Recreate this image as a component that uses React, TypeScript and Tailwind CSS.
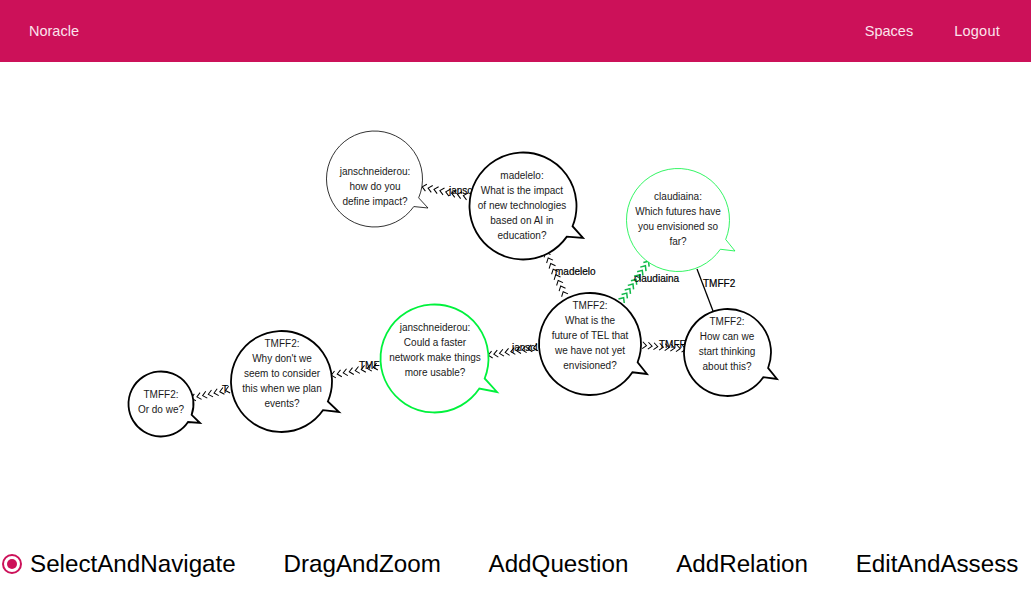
const pink = "#cc1159";
const green = "#00f23c";

type Bubble = {
  cx: number;
  cy: number;
  r: number;
  stroke: string;
  width: number;
  tail: [number, number, number, number, number, number];
  textX: number;
  firstY: number;
  lines: string[];
};

const bubbles: Bubble[] = [
  { cx: 374.5, cy: 179, r: 48, stroke: "#000", width: 0.8, tail: [419, 198, 428, 208, 413, 206], textX: 375, firstY: 175, lines: ["janschneiderou:", "how do you", "define impact?"] },
  { cx: 523, cy: 206, r: 53.5, stroke: "#000", width: 1.8, tail: [572, 226, 583, 238, 566, 236], textX: 522, firstY: 179, lines: ["madelelo:", "What is the impact", "of new technologies", "based on AI in", "education?"] },
  { cx: 678, cy: 220, r: 51.5, stroke: green, width: 0.8, tail: [727, 240, 735, 251, 720, 249], textX: 678, firstY: 200, lines: ["claudiaina:", "Which futures have", "you envisioned so", "far?"] },
  { cx: 590, cy: 344, r: 51, stroke: "#000", width: 1.8, tail: [637, 362, 647, 374, 632, 372], textX: 590, firstY: 309, lines: ["TMFF2:", "What is the", "future of TEL that", "we have not yet", "envisioned?"] },
  { cx: 727.5, cy: 352.5, r: 43.5, stroke: "#000", width: 1.8, tail: [768, 368, 777, 379, 763, 377], textX: 727, firstY: 325, lines: ["TMFF2:", "How can we", "start thinking", "about this?"] },
  { cx: 434.5, cy: 358.5, r: 54, stroke: green, width: 1.8, tail: [486, 379, 497, 392, 480, 389], textX: 435, firstY: 331, lines: ["janschneiderou:", "Could a faster", "network make things", "more usable?"] },
  { cx: 281.5, cy: 381.5, r: 50.5, stroke: "#000", width: 1.8, tail: [329, 402, 339, 412, 323, 410], textX: 282, firstY: 347, lines: ["TMFF2:", "Why don't we", "seem to consider", "this when we plan", "events?"] },
  { cx: 161, cy: 404, r: 32.5, stroke: "#000", width: 1.8, tail: [192, 415, 200, 423, 188, 422], textX: 161, firstY: 398, lines: ["TMFF2:", "Or do we?"] },
];

// labels are cut where the bubbles cover them in the picture
const edges = [
  { from: [470, 197], to: [423, 187], color: "#000", weight: 1, label: "jansc", lx: 449, ly: 194 },
  { from: [566, 298], to: [546, 253], color: "#000", weight: 1, label: "madelelo", lx: 555, ly: 275 },
  { from: [620, 303], to: [648, 262], color: "#12b84a", weight: 1.5, label: "claudiaina", lx: 634, ly: 282 },
  { from: [540, 347], to: [489, 355], color: "#000", weight: 1, label: "janscl", lx: 512, ly: 351 },
  { from: [640, 345], to: [685, 349], color: "#000", weight: 1, label: "TMFF", lx: 659, ly: 348 },
  { from: [380, 366], to: [332, 375], color: "#000", weight: 1, label: "TMF", lx: 359, ly: 369 },
  { from: [232, 389], to: [192, 398], color: "#000", weight: 1, label: "T", lx: 222, ly: 393 },
];

function bubblePath(b: Bubble) {
  // snap the tail's base points onto the circle so the outline is one stroke
  const snap = (x: number, y: number) => {
    const a = Math.atan2(y - b.cy, x - b.cx);
    return [b.cx + b.r * Math.cos(a), b.cy + b.r * Math.sin(a)];
  };
  const [sx, sy] = snap(b.tail[0], b.tail[1]);
  const [ex, ey] = snap(b.tail[4], b.tail[5]);
  return `M${sx} ${sy}A${b.r} ${b.r} 0 1 0 ${ex} ${ey}L${b.tail[2]} ${b.tail[3]}Z`;
}

function Chevrons({ from, to, color, weight }: { from: number[]; to: number[]; color: string; weight: number }) {
  const dx = to[0] - from[0];
  const dy = to[1] - from[1];
  const len = Math.hypot(dx, dy);
  const count = Math.floor(len / 5.5);
  const angle = (Math.atan2(dy, dx) * 180) / Math.PI;
  return (
    <g>
      {Array.from({ length: count }, (_, i) => {
        const t = (i + 0.8) / count;
        return (
          <path
            key={i}
            d="M-2 -3.5L2 0L-2 3.5"
            fill="none"
            stroke={color}
            strokeWidth={weight}
            transform={`translate(${from[0] + dx * t} ${from[1] + dy * t}) rotate(${angle})`}
          />
        );
      })}
    </g>
  );
}

function Graph() {
  return (
    <svg width="1031" height="470" viewBox="0 62 1031 470" className="block font-['Liberation_Sans',sans-serif]">
      {edges.map((e, i) => (
        <g key={i}>
          <Chevrons from={e.from} to={e.to} color={e.color} weight={e.weight} />
          <text x={e.lx} y={e.ly} fontSize="10" fill="#000" stroke="#000" strokeWidth="0.2">
            {e.label}
          </text>
        </g>
      ))}
      <line x1="697" y1="269" x2="713" y2="311" stroke="#000" strokeWidth="1.3" />
      <text x="703" y="287" fontSize="10" fill="#000" stroke="#000" strokeWidth="0.2">
        TMFF2
      </text>
      {bubbles.map((b, i) => (
        <g key={i}>
          <path d={bubblePath(b)} fill="#fff" stroke={b.stroke} strokeWidth={b.width} strokeLinejoin="miter" />
          {b.lines.map((line, j) => (
            <text key={j} x={b.textX} y={b.firstY + j * 15} fontSize="10" fill="#1a1a1a" textAnchor="middle">
              {line}
            </text>
          ))}
        </g>
      ))}
    </svg>
  );
}

const tools = ["DragAndZoom", "AddQuestion", "AddRelation", "EditAndAssess"];

export default function App() {
  return (
    <div className="w-[1031px] h-[598px] overflow-hidden bg-white font-['Liberation_Sans',sans-serif]">
      <header className="h-[62px] bg-[#cc1159] flex items-center justify-between pt-[1px] pl-[29px] pr-[31px] text-[14.5px] text-[#fbe3ec]">
        <span>Noracle</span>
        <nav className="flex gap-[41px]">
          <span className="-ml-[2px]">Spaces</span>
          <span className="tracking-[0.25px]">Logout</span>
        </nav>
      </header>
      <Graph />
      <div className="h-[64px] flex items-center gap-[47.75px] pl-[2px] text-[24.2px] text-black">
        <label className="flex items-center gap-2">
          <span className="w-5 h-5 rounded-full border-[2.5px] border-[#cc1159] flex items-center justify-center">
            <span className="w-[10px] h-[10px] rounded-full bg-[#cc1159]" />
          </span>
          SelectAndNavigate
        </label>
        {tools.map((t) => (
          <span key={t}>{t}</span>
        ))}
      </div>
    </div>
  );
}
